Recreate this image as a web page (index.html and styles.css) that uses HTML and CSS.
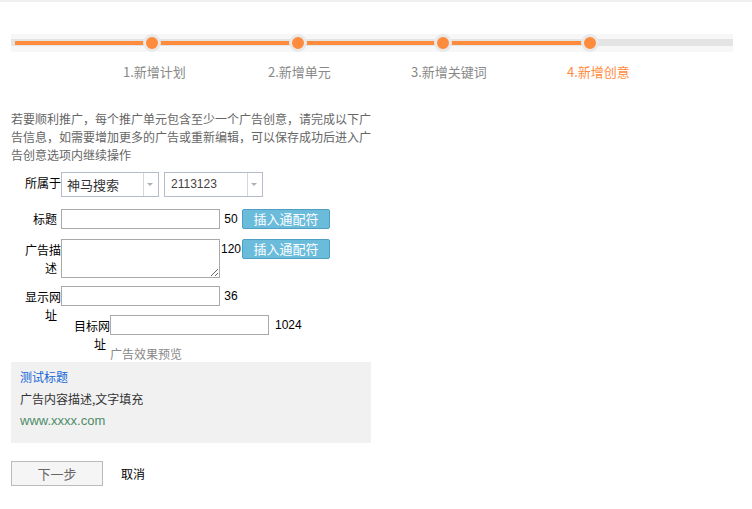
FILE: index.html
```html
<!DOCTYPE html>
<html lang="zh-CN">
<head>
<meta charset="utf-8">
<title>新增创意</title>
<link rel="stylesheet" href="styles.css">
</head>
<body>
<div class="page">
  <div class="steps">
    <div class="track">
      <div class="rail"><div class="fill"></div></div>
      <span class="dot dot-1"></span>
      <span class="dot dot-2"></span>
      <span class="dot dot-3"></span>
      <span class="dot dot-4"></span>
    </div>
    <div class="step-labels">
      <span class="step step-1">1.新增计划</span>
      <span class="step step-2">2.新增单元</span>
      <span class="step step-3">3.新增关键词</span>
      <span class="step step-4 current">4.新增创意</span>
    </div>
  </div>

  <p class="intro">若要顺利推广，每个推广单元包含至少一个广告创意，请完成以下广告信息，如需要增加更多的广告或重新编辑，可以保存成功后进入广告创意选项内继续操作</p>

  <form class="form">
    <div class="row row-unit">
      <label class="lbl">所属于</label>
      <div class="select sel-plan"><span class="sel-text">神马搜索</span><span class="sel-arrow"></span></div>
      <div class="select sel-unit"><span class="sel-text num">2113123</span><span class="sel-arrow"></span></div>
    </div>

    <div class="row row-title">
      <label class="lbl"><span class="tail">标题</span></label>
      <input class="field" type="text">
      <span class="count">50</span>
      <button class="btn-insert" type="button">插入通配符</button>
    </div>

    <div class="row row-desc">
      <label class="lbl"><span class="tail">广告描述</span></label>
      <textarea class="area"></textarea>
      <span class="count">120</span>
      <button class="btn-insert" type="button">插入通配符</button>
    </div>

    <div class="row row-show">
      <label class="lbl"><span class="tail">显示网址</span></label>
      <input class="field" type="text">
      <span class="count">36</span>
    </div>

    <div class="row row-target">
      <label class="lbl"><span class="tail">目标网址</span></label>
      <div class="target-col">
        <div class="target-line">
          <input class="field" type="text">
          <span class="count count-left">1024</span>
        </div>
        <div class="preview-title">广告效果预览</div>
      </div>
    </div>

    <div class="preview">
      <div class="pv-title">测试标题</div>
      <div class="pv-desc">广告内容描述,文字填充</div>
      <div class="pv-url">www.xxxx.com</div>
    </div>

    <div class="actions">
      <button class="btn-next" type="button">下一步</button>
      <span class="cancel">取消</span>
    </div>
  </form>
</div>
</body>
</html>
```

FILE: styles.css
```css
html, body {
  margin: 0;
  padding: 0;
  background: #fff;
}

body {
  border-top: 2px solid #f0f0f0;
  font-family: "Noto Sans CJK SC", "Liberation Sans", sans-serif;
  color: #000;
}

.page {
  padding-left: 11px;
}

/* ---------- steps ---------- */
.steps {
  padding-top: 32px;
}

.track {
  position: relative;
  width: 722px;
  height: 18px;
  padding-top: 5px;
  box-sizing: border-box;
  background: #f7f7f7;
}

.rail {
  height: 7px;
  padding: 2px 0 0 4px;
  box-sizing: border-box;
  background: #e4e4e4;
}

.fill {
  width: 575px;
  height: 4px;
  background: #ff8b3d;
}

.dot {
  position: absolute;
  top: 0;
  width: 12px;
  height: 12px;
  border: 3px solid #e9e9e9;
  border-radius: 50%;
  background: #ff8b3d;
}

.dot-1 { left: 132px; }
.dot-2 { left: 278px; }
.dot-3 { left: 423px; }
.dot-4 { left: 570px; }

.step-labels {
  display: flex;
  margin-top: 11px;
  padding-left: 112px;
  font-size: 13px;
  line-height: 18px;
  color: #888;
}

.step { flex: none; }
.step-1 { width: 145px; }
.step-2 { width: 143px; }
.step-3 { width: 156px; }
.step.current { color: #ff8b3d; }

/* ---------- intro ---------- */
.intro {
  margin: 29px 0 0;
  width: 361px;
  font-size: 12px;
  line-height: 18px;
  color: #666;
}

/* ---------- form ---------- */
.form {
  margin: 0;
}

.row {
  display: flex;
  align-items: flex-start;
  padding-left: 10px;
}

.lbl {
  flex: none;
  width: 40px;
  margin-top: 2px;
  text-align: right;
  font-size: 12px;
  line-height: 18px;
  color: #000;
}

.tail {
  padding-right: 4px;
}

.row-unit { margin-top: 8px; }
.row-unit .lbl { margin-top: 2px; }

.select {
  flex: none;
  display: flex;
  height: 25px;
  border: 1px solid #b5bcc9;
  box-sizing: border-box;
  background: #fff;
}

.sel-plan { width: 98px; }
.sel-unit { width: 99px; margin-left: 5px; }

.sel-text {
  flex: 1;
  padding-left: 5px;
  font-size: 13px;
  line-height: 23px;
  color: #333;
}

.sel-text.num {
  padding-left: 6px;
  font-family: "Liberation Sans", sans-serif;
  font-size: 12px;
  color: #444;
}

.sel-arrow {
  width: 15px;
  border-left: 1px solid #d4d8de;
  display: flex;
  align-items: center;
  justify-content: center;
  padding-right: 2px;
  box-sizing: border-box;
}

.sel-arrow::after {
  content: "";
  border-left: 3px solid transparent;
  border-right: 3px solid transparent;
  border-top: 3px solid #a9b1ba;
}

.row-title { margin-top: 12px; }
.row-title .lbl { margin-top: 1px; }

.field {
  flex: none;
  width: 159px;
  height: 20px;
  margin: 0;
  padding: 0 3px;
  border: 1px solid #a9a9a9;
  box-sizing: border-box;
  background: #fff;
}

.area {
  flex: none;
  width: 159px;
  height: 39px;
  margin: 0;
  padding: 2px;
  border: 1px solid #a9a9a9;
  box-sizing: border-box;
  background: #fff;
}

.count {
  flex: none;
  width: 22px;
  text-align: center;
  font-family: "Liberation Sans", sans-serif;
  font-size: 12px;
  line-height: 20px;
  color: #000;
}

.count-left {
  width: auto;
  margin-left: 6px;
  text-align: left;
}

.btn-insert {
  flex: none;
  width: 88px;
  height: 20px;
  margin: 0;
  padding: 0;
  border: 1px solid #4e9fc3;
  border-radius: 2px;
  background: #6bbbdb;
  color: #fff;
  font-family: "Noto Sans CJK SC", sans-serif;
  font-size: 13px;
  line-height: 18px;
}

.row-desc { margin-top: 10px; }
.row-show { margin-top: 8px; }

.row-target {
  margin-top: -9px;
  padding-left: 59px;
}

.target-col {
  display: flex;
  flex-direction: column;
}

.target-line {
  display: flex;
  align-items: flex-start;
}

.preview-title {
  margin-top: 10px;
  font-size: 12px;
  line-height: 17px;
  color: #888;
}

/* ---------- preview ---------- */
.preview {
  width: 360px;
  padding: 4px 9px 11px;
  box-sizing: border-box;
  background: #f1f1f1;
  font-size: 12px;
  line-height: 22px;
}

.pv-title { color: #1565d8; }
.pv-desc { color: #333; }
.pv-url {
  font-family: "Liberation Sans", sans-serif;
  font-size: 13px;
  color: #4d8c68;
}

/* ---------- actions ---------- */
.actions {
  display: flex;
  align-items: center;
  margin-top: 18px;
}

.btn-next {
  width: 92px;
  height: 25px;
  margin: 0;
  padding: 0;
  border: 1px solid #bbb;
  background: #f5f5f5;
  color: #666;
  font-family: "Noto Sans CJK SC", sans-serif;
  font-size: 13px;
}

.cancel {
  margin-left: 18px;
  font-size: 12px;
  color: #000;
}
```
